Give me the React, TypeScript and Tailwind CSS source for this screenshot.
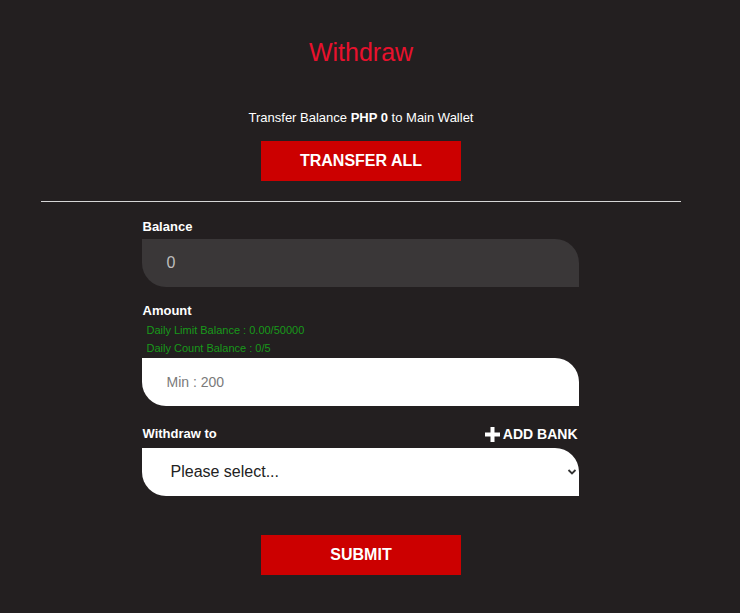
import { useState } from "react";

const font = { fontFamily: '"Liberation Sans", Arial, sans-serif' };

function PlusIcon() {
  return (
    <svg width="15" height="15" viewBox="0 0 15 15" className="mr-[3px]">
      <rect x="5.5" y="0" width="4" height="15" fill="#fff" />
      <rect x="0" y="5.5" width="15" height="4" fill="#fff" />
    </svg>
  );
}

export default function App() {
  const [amount, setAmount] = useState("");
  const [bank, setBank] = useState("");

  return (
    <div className="min-h-screen bg-[#231f20] text-white" style={font}>
      <div className="w-[722px] flex flex-col items-center pt-[37px] pb-10">
        <h1 className="text-[25px] leading-[30px] text-[#e8112d]">Withdraw</h1>

        <p className="mt-[43px] text-[13px] leading-4">
          Transfer Balance <span className="font-bold">PHP 0</span> to Main Wallet
        </p>

        <button className="mt-[15px] w-[200px] h-10 bg-[#cc0000] text-white font-bold text-base">
          TRANSFER ALL
        </button>

        <div className="mt-5 w-[640px] border-t border-[#d6d6d6]" />

        <form
          className="w-[437px] mt-[17px] -translate-x-[1px] flex flex-col"
          onSubmit={(e) => e.preventDefault()}
        >
          <label className="text-[13px] leading-4 font-bold pl-[1px]">Balance</label>
          <div className="mt-1 h-12 bg-[#3a3738] rounded-tr-[24px] rounded-bl-[24px] flex items-center pl-[25px] text-base text-[#bdbdbd]">
            0
          </div>

          <label className="mt-4 text-[13px] leading-4 font-bold pl-[1px]">Amount</label>
          <div className="mt-[2px] pl-[5px] text-[11px] leading-[18px] text-[#18991a]">
            <div>Daily Limit Balance : 0.00/50000</div>
            <div>Daily Count Balance : 0/5</div>
          </div>
          <input
            value={amount}
            onChange={(e) => setAmount(e.target.value)}
            placeholder="Min : 200"
            className="mt-[1px] h-12 bg-white rounded-tr-[24px] rounded-bl-[24px] pl-[25px] text-sm text-[#333] placeholder:text-[#7a7a7a] outline-none"
          />

          <div className="mt-5 h-4 flex items-center justify-between leading-4">
            <label className="text-[13px] font-bold pl-[1px]">Withdraw to</label>
            <a className="flex items-center text-sm font-bold cursor-pointer pr-[1px]">
              <PlusIcon />
              ADD BANK
            </a>
          </div>
          <div className="relative mt-[6px]">
            <select
              value={bank}
              onChange={(e) => setBank(e.target.value)}
              className="appearance-none w-full h-12 bg-white rounded-tr-[24px] rounded-bl-[24px] pl-[29px] text-base text-[#222] outline-none"
            >
              <option value="">Please select...</option>
            </select>
            <svg
              width="10"
              height="10"
              viewBox="0 0 10 10"
              className="absolute right-[2px] top-[19px] pointer-events-none"
            >
              <path d="M1.5 3 L5 6.5 L8.5 3" stroke="#333" strokeWidth="1.8" fill="none" />
            </svg>
          </div>

          <button className="mt-[39px] self-center translate-x-[1px] w-[200px] h-10 bg-[#cc0000] text-white font-bold text-base">
            SUBMIT
          </button>
        </form>
      </div>
    </div>
  );
}
